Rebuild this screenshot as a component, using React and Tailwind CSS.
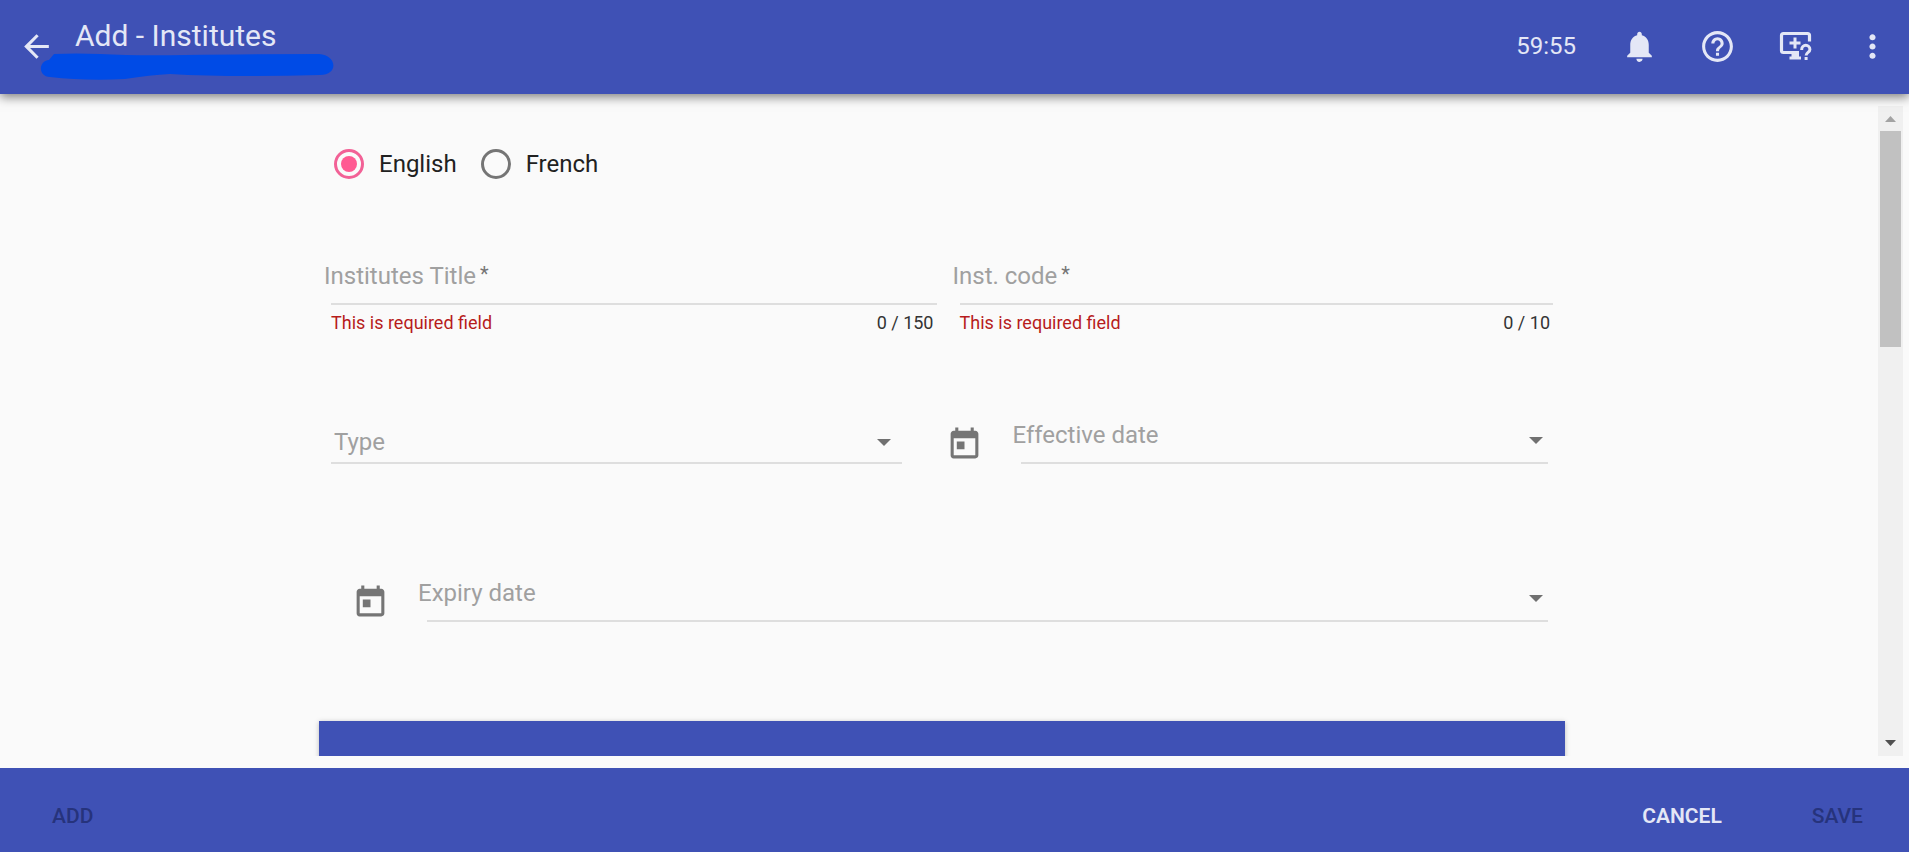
import React, { useState } from "react";
import {
  MdArrowBack,
  MdNotifications,
  MdHelpOutline,
  MdMoreVert,
  MdToday,
} from "react-icons/md";

const monitorHelp = (
  <svg viewBox="0 0 36 36" className="h-9 w-9" fill="none" stroke="currentColor" aria-hidden="true">
    <path d="M32.500 13.500V7.500a2 2 0 0 0-2-2H6.500a2 2 0 0 0-2 2V22.500a2 2 0 0 0 2 2H22" strokeWidth="3.200" />
    <path d="M14.500 24.500H22v4h2V31.500H12.500v-3h2z" fill="currentColor" stroke="none" />
    <path d="M18 9.500v11M12.500 15H23.500" strokeWidth="3" />
    <path d="M24.700 22v-.6a4.100 4.100 0 0 1 8.200 0c0 3-3.800 3-3.800 6.200" strokeWidth="3" />
    <path d="M27.600 29h3v3h-3z" fill="currentColor" stroke="none" />
  </svg>
);

function Arrow() {
  return (
    <svg viewBox="0 0 14 7" className="h-[7px] w-[14px]" aria-hidden="true">
      <path d="M0 0h14L7 7z" fill="#707070" />
    </svg>
  );
}

function Language({ id, label, checked, onChange }) {
  return (
    <div className="flex items-center gap-[15px]">
      <input
        id={id}
        type="radio"
        name="language"
        checked={checked}
        onChange={onChange}
        className="grid h-[30px] w-[30px] appearance-none place-items-center rounded-full border-3 border-[#757575] before:h-4 before:w-4 before:rounded-full checked:border-[#f26196] checked:before:bg-[#ff5a92]"
      />
      <label htmlFor={id} className="text-[#212121]">{label}</label>
    </div>
  );
}

function CountedField({ id, label, max }) {
  const [value, setValue] = useState("");
  return (
    <div className="grid">
      <label htmlFor={id} className="col-start-1 row-start-1 text-[#a0a0a0]">
        {value === "" && (
          <>
            {label}
            <sup className="top-0 ml-1 align-top text-[20px] leading-7 text-[#757575]">*</sup>
          </>
        )}
      </label>
      <input
        id={id}
        value={value}
        maxLength={max}
        onChange={(e) => setValue(e.target.value)}
        className="col-start-1 row-start-1 ml-[7px] h-[45px] border-b-2 border-[#dedede] bg-transparent outline-none"
      />
      <div className="ml-[7px] flex justify-between pt-[6px] pr-[3px] text-[18px] leading-6">
        <span className="text-[#b71c1c]">This is required field</span>
        <span className="text-[#333]">{value.length} / {max}</span>
      </div>
    </div>
  );
}

function DateField({ id, label }) {
  const [value, setValue] = useState("");
  return (
    <div className="flex flex-1 gap-[29px]">
      <MdToday className="mt-[7px] h-[37px] w-[37px] text-[#757575]" aria-hidden="true" />
      <div className="grid flex-1">
        <label htmlFor={id} className="col-start-1 row-start-1 text-[#a0a0a0]">
          {value === "" && label}
        </label>
        <input
          id={id}
          value={value}
          onChange={(e) => setValue(e.target.value)}
          className="col-start-1 row-start-1 ml-[9px] h-[45px] border-b-2 border-[#dedede] bg-transparent outline-none"
        />
        <button
          type="button"
          aria-label={"Open calendar for " + label}
          className="col-start-1 row-start-1 mt-[15px] mr-[5px] h-3 self-start justify-self-end"
        >
          <Arrow />
        </button>
      </div>
    </div>
  );
}

function InstituteForm() {
  const [language, setLanguage] = useState("English");
  return (
    <form className="mx-auto w-full max-w-[1246px] text-[24px] leading-8">
      <div className="flex gap-6 pt-[42px] pl-[15px]">
        {["English", "French"].map((name) => (
          <Language
            key={name}
            id={name.toLowerCase()}
            label={name}
            checked={language === name}
            onChange={() => setLanguage(name)}
          />
        ))}
      </div>

      <div className="mt-20 grid grid-cols-[51fr_50fr] gap-4 pr-3 pl-[5px]">
        <CountedField id="title" label="Institutes Title" max={150} />
        <CountedField id="code" label="Inst. code" max={10} />
      </div>

      <div className="mt-[84px] grid grid-cols-[19fr_20fr] gap-11 pr-[17px] pl-3">
        <div className="grid">
          <select
            id="type"
            aria-label="Type"
            className="col-start-1 row-start-1 mt-1 h-[41px] appearance-none border-b-2 border-[#dedede] bg-transparent pb-[2px] pl-[3px] text-[#a0a0a0] outline-none"
          >
            <option>Type</option>
          </select>
          <span className="pointer-events-none col-start-1 row-start-1 mt-5 mr-[11px] h-3 justify-self-end">
            <Arrow />
          </span>
        </div>
        <DateField id="effective" label="Effective date" />
      </div>

      <div className="mt-[113px] flex pr-[17px] pl-[33px]">
        <DateField id="expiry" label="Expiry date" />
      </div>

      <div className="mt-[99px] h-24 bg-[#3f51b5] shadow-[0_1px_5px_rgba(0,0,0,0.25)]" />
    </form>
  );
}

function ScrollBar() {
  return (
    <div className="flex w-[25px] flex-col items-center bg-[#f0f0f0]" aria-hidden="true">
      <svg viewBox="0 0 25 25" className="h-[25px] w-[25px] shrink-0">
        <path d="M7 16h11l-5.500-6z" fill="#a3a3a3" />
      </svg>
      <div className="w-full flex-1 px-[2px]">
        <div className="h-[36%] bg-[#c1c1c1]" />
      </div>
      <svg viewBox="0 0 25 25" className="h-[25px] w-[25px] shrink-0">
        <path d="M7 9h11l-5.500 6z" fill="#505050" />
      </svg>
    </div>
  );
}

export default function App() {
  return (
    <div className="flex h-screen flex-col bg-[#fafafa] font-[Roboto,sans-serif]">
      <header className="z-10 flex h-[94px] shrink-0 items-center bg-[#3f51b5] px-[18px] text-[#e4e7f6] shadow-[0_3px_10px_rgba(0,0,0,0.5)]">
        <button type="button" aria-label="Back" className="pb-[2px]">
          <MdArrowBack className="h-[37px] w-[37px]" />
        </button>
        <div className="relative ml-5 flex h-full flex-1 items-start pt-4">
          <h1 className="text-[30px] leading-10">Add - Institutes</h1>
          <svg
            viewBox="0 0 294 28"
            className="absolute top-[53px] -left-[35px] h-7 w-[294px]"
            aria-hidden="true"
          >
            <path
              d="M14 1Q36 0 60 1Q96 3 145 2Q205 1 279 1C297 2 299 22 280 22Q245 23 210 23Q165 23 130 21Q110 22 85 26Q45 28 10 24C-2 24-2 8 9 7Z"
              fill="#004be6"
            />
          </svg>
        </div>
        <div className="flex items-center pb-[2px]">
          <span className="mr-[45px] text-[24px] leading-8">59:55</span>
          <button type="button" aria-label="Notifications" className="mr-[41px]">
            <MdNotifications className="h-[37px] w-[37px]" />
          </button>
          <button type="button" aria-label="Help" className="mr-[41px]">
            <MdHelpOutline className="h-[37px] w-[37px]" />
          </button>
          <button type="button" aria-label="Guided tour" className="mr-[41px]">
            {monitorHelp}
          </button>
          <button type="button" aria-label="More options">
            <MdMoreVert className="h-[37px] w-[37px]" />
          </button>
        </div>
      </header>

      <main className="my-3 flex min-h-0 flex-1 px-[6px]">
        <div className="min-w-0 flex-1 overflow-y-auto [scrollbar-width:none]">
          <InstituteForm />
        </div>
        <ScrollBar />
      </main>

      <footer className="flex h-[84px] shrink-0 items-center bg-[#3f51b5] pt-3 pr-[46px] pl-[52px] text-[21px] leading-7 font-medium">
        <button type="button" disabled className="text-[#26337c]">ADD</button>
        <button type="button" className="ml-auto font-semibold text-[#e4e7f6]">CANCEL</button>
        <button type="button" disabled className="ml-[90px] text-[#26337c]">SAVE</button>
      </footer>
    </div>
  );
}
